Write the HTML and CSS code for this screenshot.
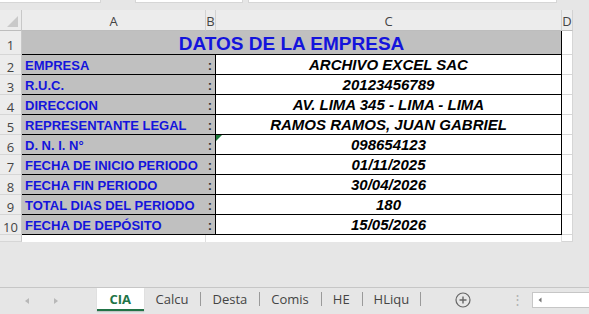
FILE: index.html
```html
<!DOCTYPE html>
<html lang="es">

<head>
    <meta charset="UTF-8">
    <title>CIA - Datos de la empresa</title>
    <link rel="stylesheet" href="styles.css">
</head>

<body>

    <!-- formula bar remnants -->
    <div class="topbar">
        <span class="box box-name"></span>
        <span class="box box-fx"></span>
        <span class="box box-formula"></span>
    </div>

    <div class="sheet">
        <div class="grid">
            <!-- column headers -->
            <div class="corner"></div>
            <div class="colhead">A</div>
            <div class="colhead">B</div>
            <div class="colhead">C</div>
            <div class="colhead">D</div>

            <!-- row 1 -->
            <div class="rowhead">1</div>
            <div class="title">DATOS DE LA EMPRESA</div>
            <div class="empty"></div>

            <div class="rowhead">2</div>
            <div class="label">EMPRESA</div>
            <div class="colon">:</div>
            <div class="value">ARCHIVO EXCEL SAC</div>
            <div class="empty"></div>

            <div class="rowhead">3</div>
            <div class="label">R.U.C.</div>
            <div class="colon">:</div>
            <div class="value">20123456789</div>
            <div class="empty"></div>

            <div class="rowhead">4</div>
            <div class="label">DIRECCION</div>
            <div class="colon">:</div>
            <div class="value">AV. LIMA 345 - LIMA - LIMA</div>
            <div class="empty"></div>

            <div class="rowhead">5</div>
            <div class="label">REPRESENTANTE LEGAL</div>
            <div class="colon">:</div>
            <div class="value">RAMOS RAMOS, JUAN GABRIEL</div>
            <div class="empty"></div>

            <div class="rowhead">6</div>
            <div class="label">D. N. I. N°</div>
            <div class="colon">:</div>
            <div class="value flagged">098654123</div>
            <div class="empty"></div>

            <div class="rowhead">7</div>
            <div class="label">FECHA DE INICIO PERIODO</div>
            <div class="colon">:</div>
            <div class="value">01/11/2025</div>
            <div class="empty"></div>

            <div class="rowhead">8</div>
            <div class="label">FECHA FIN PERIODO</div>
            <div class="colon">:</div>
            <div class="value">30/04/2026</div>
            <div class="empty"></div>

            <div class="rowhead">9</div>
            <div class="label">TOTAL DIAS DEL PERIODO</div>
            <div class="colon">:</div>
            <div class="value">180</div>
            <div class="empty"></div>

            <div class="rowhead">10</div>
            <div class="label">FECHA DE DEPÓSITO</div>
            <div class="colon">:</div>
            <div class="value">15/05/2026</div>
            <div class="empty"></div>

            <!-- row 11, cut off -->
            <div class="rowhead cut"></div>
            <div class="blank"></div>
            <div class="blank"></div>
            <div class="blank"></div>
            <div class="empty"></div>
        </div>
    </div>

    <!-- sheet tabs -->
    <div class="tabbar">
        <div class="nav">
            <svg width="8" height="8" viewBox="0 0 8 8"><path d="M6 1 L2 4 L6 7 Z" fill="#b8b8b8"/></svg>
            <svg width="8" height="8" viewBox="0 0 8 8"><path d="M2 1 L6 4 L2 7 Z" fill="#b8b8b8"/></svg>
        </div>
        <div class="tabs">
            <div class="tab active">CIA</div>
            <div class="tab">Calcu</div>
            <div class="tab">Desta</div>
            <div class="tab">Comis</div>
            <div class="tab">HE</div>
            <div class="tab">HLiqu</div>
        </div>
        <div class="addsheet">
            <svg width="16" height="16" viewBox="0 0 16 16">
                <circle cx="8" cy="8" r="7" fill="none" stroke="#666" stroke-width="1.2"/>
                <path d="M8 4.5 V11.5 M4.5 8 H11.5" stroke="#666" stroke-width="1.4"/>
            </svg>
        </div>
        <div class="dots">⋮</div>
        <div class="hscroll">
            <svg width="8" height="8" viewBox="0 0 8 8"><path d="M5.5 1.5 L2.5 4 L5.5 6.5 Z" fill="#777"/></svg>
        </div>
    </div>

</body>

</html>
```

FILE: styles.css
```css
* {
    box-sizing: border-box;
}

body {
    margin: 0;
    width: 589px;
    height: 314px;
    overflow: hidden;
    background-color: #e6e6e6;
    display: flex;
    flex-direction: column;
    font-family: 'Open Sans', sans-serif;
}

/* Formula bar leftovers */
.topbar {
    height: 10px;
    display: flex;
    align-items: flex-start;
}

.box {
    height: 3px;
    background-color: #fff;
    border-bottom: 1px solid #d6d6d6;
}

.box-name {
    width: 101px;
    border-right: 1px solid #d6d6d6;
}

.box-fx {
    width: 108px;
    margin-left: 34px;
    border-left: 1px solid #d6d6d6;
    border-right: 1px solid #d6d6d6;
}

.box-formula {
    width: 309px;
    margin-left: 5px;
    border-left: 1px solid #d6d6d6;
    border-right: 1px solid #d6d6d6;
}

/* Sheet grid */
.sheet {
    flex: 1;
}

.grid {
    display: grid;
    grid-template-columns: 22px 184px 10px 346px 11px;
    grid-template-rows: 21px 24px repeat(9, 20px) 7px;
    width: 573px;
}

.corner {
    background-color: #ececec;
    border-right: 1px solid #c8c8c8;
    border-bottom: 1px solid #bdbdbd;
    position: relative;
}

.corner::after {
    content: "";
    position: absolute;
    right: 3px;
    bottom: 3px;
    border-left: 11px solid transparent;
    border-bottom: 11px solid #c9c9c9;
}

.colhead {
    background-color: #ececec;
    border-right: 1px solid #d2d2d2;
    border-bottom: 1px solid #bdbdbd;
    color: #444;
    font-size: 13px;
    text-align: center;
    line-height: 20px;
    padding-top: 1px;
}

.rowhead {
    background-color: #ececec;
    border-right: 1px solid #c8c8c8;
    border-bottom: 1px solid #d6d6d6;
    color: #444;
    font-size: 13px;
    text-align: center;
    line-height: 19px;
    padding-top: 3px;
}

.rowhead:nth-child(6) {
    padding-top: 5px;
}

.title {
    grid-column: span 3;
    background-color: #c0c0c0;
    border-right: 1px solid #000;
    border-bottom: 1px solid #000;
    color: #1414dc;
    font-family: 'Liberation Sans', Arial, sans-serif;
    font-weight: bold;
    font-size: 19px;
    text-align: center;
    line-height: 24px;
    padding-top: 1px;
}

.label,
.colon {
    background-color: #c0c0c0;
    border-bottom: 1px solid #000;
    color: #1414dc;
    font-family: 'Liberation Sans', Arial, sans-serif;
    font-weight: bold;
    font-size: 13px;
    line-height: 20px;
    padding-top: 1px;
}

.label {
    padding-left: 3px;
    white-space: nowrap;
}

.colon {
    color: #333;
    text-align: right;
    padding-right: 3px;
    border-right: 1px solid #000;
}

.value {
    background-color: #fff;
    border-right: 1px solid #000;
    border-bottom: 1px solid #000;
    color: #000;
    font-family: 'Liberation Sans', Arial, sans-serif;
    font-weight: bold;
    font-style: italic;
    font-size: 15px;
    text-align: center;
    line-height: 19px;
    white-space: nowrap;
}

/* green error marker in the corner of a cell */
.flagged {
    position: relative;
}

.flagged::before {
    content: "";
    position: absolute;
    left: 0;
    top: 0;
    border-top: 6px solid #1e7b3c;
    border-right: 6px solid transparent;
}

.empty {
    background-color: #fff;
    border-right: 1px solid #d6d6d6;
    border-bottom: 1px solid #d6d6d6;
}

.blank {
    background-color: #fff;
    border-right: 1px solid #e0e0e0;
}

.blank:nth-last-child(3) {
    border-right: none;
}

/* Sheet tab bar */
.tabbar {
    height: 27px;
    border-top: 1px solid #c6c6c6;
    display: flex;
    align-items: flex-start;
    font-size: 13px;
    color: #444;
}

.nav {
    width: 97px;
    display: flex;
    gap: 21px;
    padding-left: 23px;
    padding-top: 9px;
}

.tabs {
    display: flex;
}

.tab {
    height: 23px;
    line-height: 22px;
    padding: 0 12px;
    position: relative;
}

.tab + .tab::before {
    content: "";
    position: absolute;
    left: 0;
    top: 4px;
    height: 14px;
    border-left: 1px solid #9a9a9a;
}

.tab:last-child::after {
    content: "";
    position: absolute;
    right: 0;
    top: 4px;
    height: 14px;
    border-left: 1px solid #9a9a9a;
}

.tab.active {
    background-color: #fff;
    color: #217346;
    font-weight: bold;
    padding: 0 12.5px;
    border-bottom: 2px solid #217346;
    box-shadow: 0 1px 1px rgba(0, 0, 0, 0.15);
}

.tab.active + .tab::before {
    display: none;
}

.addsheet {
    margin-left: 34px;
    padding-top: 4px;
}

.dots {
    margin-left: 40px;
    color: #b0b0b0;
    line-height: 22px;
}

.hscroll {
    margin-left: 8px;
    margin-top: 4px;
    flex: 1;
    height: 16px;
    background-color: #fff;
    border: 1px solid #c6c6c6;
    border-right: none;
    padding-left: 3px;
    padding-top: 3px;
}

.hscroll svg {
    display: block;
}
```
